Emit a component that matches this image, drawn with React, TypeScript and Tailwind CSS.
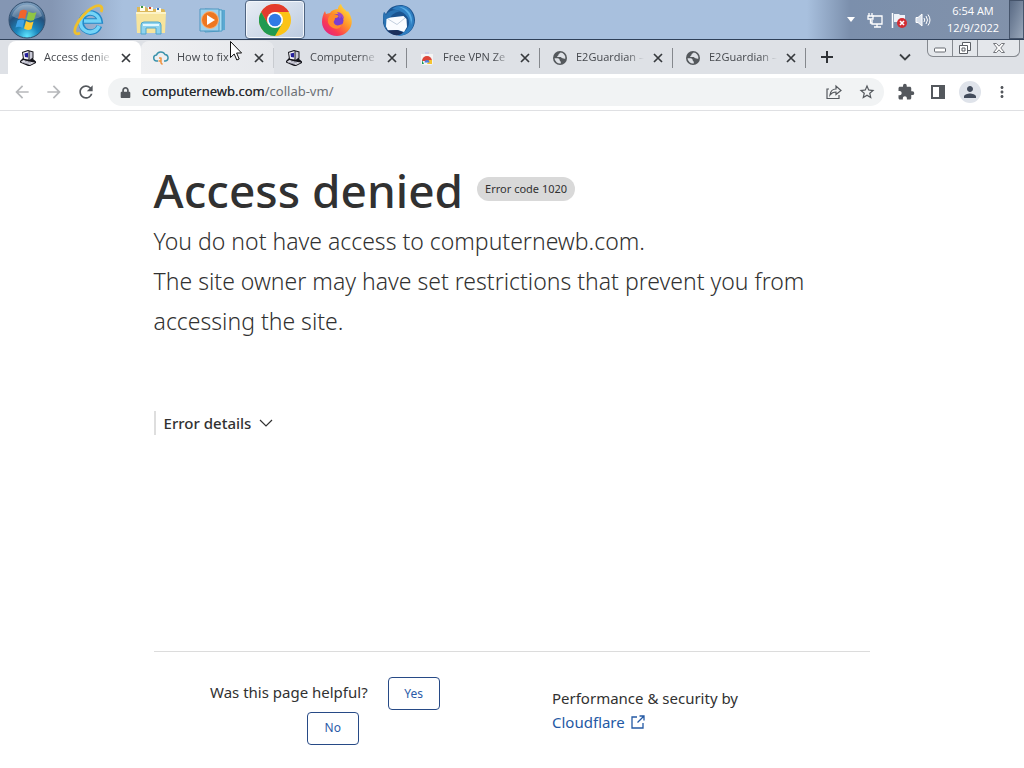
import type { ReactNode } from "react";
import { FaLock } from "react-icons/fa";
import { MdPerson, MdRefresh, MdStarOutline, MdArrowBack, MdArrowForward, MdMoreVert, MdExtension } from "react-icons/md";

const tabs = [
  { title: "Access denie", icon: "computer", state: "active" },
  { title: "How to fix", icon: "cloud", state: "hover" },
  { title: "Computerne", icon: "computer", state: "idle" },
  { title: "Free VPN Ze", icon: "store", state: "idle" },
  { title: "E2Guardian –", icon: "globe", state: "idle" },
  { title: "E2Guardian –", icon: "globe", state: "idle" },
];

function ComputerIcon() {
  return (
    <svg viewBox="0 0 16 16" className="size-4">
      <path d="M0 11l3-3h9l4 3.500v1.500l-6 3H8l-8-3.500z" fill="#15151c" />
      <path d="M1 11.500L3.500 10l8 2 3.500.5-5 2.500L2 12.500z" fill="#dcdce4" />
      <path d="M2 2l6-2 5.500 1.500V8.500L9 11.500 3 9.500z" fill="#15151c" />
      <path d="M3 2.700L8.500 1v8.500L4 8.700z" fill="#f2f2f5" />
      <path d="M4.500 3.500L8 2.700v4.800l-3-.6z" fill="#241f9c" />
      <path d="M9.500 1.500l3 .8v5.500L9.500 10z" fill="#c9c9d6" />
      <path d="M3 12.500l6 1.700M5 11.300l6 1.700" stroke="#6b6b85" strokeWidth="0.500" />
    </svg>
  );
}

function CloudIcon() {
  return (
    <svg viewBox="0 0 16 16" className="size-4" fill="none" strokeWidth="1.500">
      <path d="M5 11H4a3 3 0 01-.5-6A4.600 4.600 0 0112 4.500a3.300 3.300 0 01.500 6.500H11" stroke="#3c93ac" />
      <path d="M6 8h2.500M8 8v5l1.500 1.500M5.500 11h2.500" stroke="#ef9440" />
    </svg>
  );
}

function StoreIcon() {
  return (
    <svg viewBox="0 0 16 16" className="size-4">
      <path d="M2 4h12v9a2 2 0 01-2 2H4a2 2 0 01-2-2z" fill="#f4f4f4" />
      <path d="M6 3h4" stroke="#c5c9e8" strokeWidth="1.500" />
      <path d="M3 11a5 5 0 0110 0z" fill="#dd4437" />
      <path d="M3 10l2 4H3z" fill="#169a5d" />
      <path d="M10 10h3v4H8z" fill="#f6c431" />
      <path d="M5.500 12.500a2.500 2.500 0 015 0z" fill="#4c7fe0" />
    </svg>
  );
}

function GlobeIcon() {
  return (
    <svg viewBox="0 0 16 16" className="size-4">
      <circle cx="8" cy="8" r="7" fill="#54585c" />
      <path d="M8.500 2.600c-.3 1.200-2 .8-2 2.200 0 1.200-1.500 1-1.300 2.200h3.300c1 0 1 1.300 2 1.300s1.600.7 2.900.2a5.500 5.500 0 00-4.900-5.900z" fill="#dee1e6" />
      <path d="M2.500 8.300h3.300c1 .2 2 1 2 2.200 0 .8 1 .6 1 1.400v1.500A5.500 5.500 0 012.500 8.300z" fill="#dee1e6" />
    </svg>
  );
}

function Favicon({ name }: { name: string }) {
  if (name === "computer") return <ComputerIcon />;
  if (name === "cloud") return <CloudIcon />;
  if (name === "store") return <StoreIcon />;
  return <GlobeIcon />;
}

function CloseIcon() {
  return (
    <svg viewBox="0 0 10 10" className="size-2.5" stroke="#36393d" strokeWidth="1.700">
      <path d="M1 1l8 8M9 1L1 9" />
    </svg>
  );
}

function StartOrb() {
  return (
    <svg viewBox="0 0 38 38" className="size-[38px]">
      <defs>
        <radialGradient id="orb" cx="50%" cy="95%" r="90%">
          <stop offset="0" stopColor="#5fe6ff" />
          <stop offset="0.35" stopColor="#1b86bd" />
          <stop offset="0.7" stopColor="#24517d" />
          <stop offset="1" stopColor="#7b9dbd" />
        </radialGradient>
      </defs>
      <circle cx="19" cy="19" r="18" fill="url(#orb)" stroke="#34506f" />
      <path d="M4 15a15.500 15.500 0 0130 0c-8 5-21 5-30 0z" fill="#fff" opacity="0.25" />
      <path d="M12 10q4-2.500 7 0l-2 8q-3-2-7 0z" fill="#f0642c" />
      <path d="M20.500 10.500q4 2.500 8 .5l-2.500 8q-4 1.500-7.500-.5z" fill="#8fc545" />
      <path d="M9.500 19.500q4-2 7 0l-2 7.500q-3-2-7-.5z" fill="#3fa2e6" />
      <path d="M18 20q4 2.500 7.500.5l-2 7.500q-4 2-7.500-.5z" fill="#fdca35" />
    </svg>
  );
}

function ExplorerIcon() {
  return (
    <svg viewBox="0 0 32 32" className="size-8" fill="none">
      <path d="M26.500 22A9.500 9.500 0 1127 17H11" stroke="#2189c9" strokeWidth="5.500" />
      <path d="M26 22A9.500 9.500 0 1126.500 17H11" stroke="#74d4f7" strokeWidth="3.500" />
      <path d="M7 29c-4 2-7 0-4-7S15 5 23 2c6-1.500 7 2 5 6" stroke="#efc02c" strokeWidth="2.800" />
    </svg>
  );
}

function FolderIcon() {
  return (
    <svg viewBox="0 0 32 32" className="size-8">
      <path d="M2 3h9l2 2h15a2 2 0 012 2v22H2z" fill="#dcb859" />
      <path d="M5 2h5v5H5zM13 3h5v4h-5zM21 4h5v4h-5z" fill="#fffbe8" />
      <path d="M6 2h2v2H6z" fill="#3b9444" />
      <path d="M14 3h2v2h-2z" fill="#cf402e" />
      <path d="M22 4h2v2h-2z" fill="#3274c7" />
      <path d="M1 8h30l-1 21H2z" fill="#f7e49c" />
      <path d="M1 8h30v2H1z" fill="#fdf3c5" />
      <path d="M6 30V21q0-3 3-3h14q3 0 3 3v9h-5v-6H11v6z" fill="#8fd3ee" stroke="#4ea5cc" />
      <path d="M8 21h16" stroke="#e1f7ff" strokeWidth="2" />
    </svg>
  );
}

function MediaIcon() {
  return (
    <svg viewBox="0 0 30 30" className="size-[30px]">
      <path d="M8 4l19 1v20L8 27z" fill="#5ba9d2" />
      <path d="M7 4l17 1v21L7 27z" fill="#a7dcf2" stroke="#4e9cc4" />
      <path d="M2 4h19v22H2z" fill="#9ed2ed" stroke="#5097c0" />
      <circle cx="12" cy="15" r="8.500" fill="#ee7720" stroke="#f7b57d" />
      <path d="M9 10v10l8-5z" fill="#fff" />
    </svg>
  );
}

function ChromeIcon() {
  return (
    <svg viewBox="0 0 32 32" className="size-8">
      <circle cx="16" cy="16" r="16" fill="#fbc316" />
      <path d="M2.140 8A16 16 0 0129.860 8H16L9.070 20z" fill="#e33b2e" />
      <path d="M2.140 8A16 16 0 0016 32l6.930-12H9.070z" fill="#209a50" />
      <circle cx="16" cy="16" r="8" fill="#fff" />
      <circle cx="16" cy="16" r="6.300" fill="#2f7ae5" />
    </svg>
  );
}

function FirefoxIcon() {
  return (
    <svg viewBox="0 0 32 32" className="size-8">
      <defs>
        <linearGradient id="fox" x1="0.9" y1="0.1" x2="0.2" y2="0.9">
          <stop offset="0" stopColor="#ffe23f" />
          <stop offset="0.45" stopColor="#ff9329" />
          <stop offset="0.8" stopColor="#fb3a52" />
          <stop offset="1" stopColor="#e62a78" />
        </linearGradient>
      </defs>
      <path d="M4 7l1 3 4-1c2-3 5-4 8-4 0-2 1-4 3-5 1 4 4 5 6 8l1-1c3 5 5 10 3 15-2 6-8 10-14 10C8 32 1 26 1 18c0-4 1-8 3-11z" fill="url(#fox)" />
      <circle cx="16" cy="16.500" r="6.500" fill="#7a3ed0" />
      <path d="M9 11c3-2 5 0 7 0 3 1 1 3-2 3 0 3-2 3-1 5 1 3 5 3 8 1-1 4-5 6-9 4-5-2-7-8-3-13z" fill="#ff8a2a" />
      <path d="M16 8c4 0 7 3 7 7l-3-3c0 2-1 3-2 2 0-3-1-4-2-6z" fill="#a148c6" />
    </svg>
  );
}

function ThunderbirdIcon() {
  return (
    <svg viewBox="0 0 32 32" className="size-8">
      <path d="M1 8l2 2c3-7 10-9.500 16-9C27 2 32 9 32 16c0 8-6 15-14 15.500C9 32 2 28 0 19c-.5-4 0-7 1-11z" fill="#1c5490" />
      <path d="M9 5C15 0 24 1 28 7c5 8 4 18-5 23-3 1.500-6 2-8 1.500C24 28 28 21 25 14 22 8 15 6 9 5z" fill="#2f7fc2" />
      <path d="M16 3c7 0 13 6 13 13l-1 5C28 12 24 6 16 3z" fill="#5aaee6" />
      <path d="M1 8l2 3C6 6 13 5 18 7c-5 1-9 3-11 7L3 25C0 20-.5 13 1 8z" fill="#2a73b3" />
      <path d="M3.500 15l4-1.500 13-1.500 3 3 .5 8-3 5-6-2-10 .5-2-4z" fill="#fafcff" />
      <path d="M5 15l9 5.500 8-6.500" stroke="#c3cfde" fill="none" />
      <path d="M4 26.500l10-.5 6 2.500c-3 3-7 3.500-11 1.500z" fill="#1a2f5c" />
    </svg>
  );
}

const pinned: { name: string; icon: ReactNode; open?: boolean }[] = [
  { name: "Internet Explorer", icon: <ExplorerIcon /> },
  { name: "Windows Explorer", icon: <FolderIcon /> },
  { name: "Media Player", icon: <MediaIcon /> },
  { name: "Google Chrome", icon: <ChromeIcon />, open: true },
  { name: "Firefox", icon: <FirefoxIcon /> },
  { name: "Thunderbird", icon: <ThunderbirdIcon /> },
];

function Taskbar() {
  return (
    <header className="flex h-10 items-stretch border-b border-[#2f4059] bg-linear-to-r from-[#8496b3] from-5% via-[#a8c0de] via-12% to-[#a8c0de]">
      <button aria-label="Start" className="ml-[3px] flex w-12 items-center justify-center">
        <StartOrb />
      </button>
      <nav className="ml-2 flex gap-0.5">
        {pinned.map((app) => (
          <button
            key={app.name}
            aria-label={app.name}
            className={`flex w-[60px] items-center justify-center ${
              app.open
                ? "rounded-sm border border-[#4f6481] bg-linear-to-br from-[#e9eef5] to-[#bccbe0] shadow-[inset_0_0_0_1px_#f3f7fc]"
                : ""
            }`}
          >
            {app.icon}
          </button>
        ))}
      </nav>
      <div className="ml-auto flex items-center bg-linear-to-r from-[#a8c0de] via-[#7b8fac] via-20% to-[#8292aa] pl-10">
        <button aria-label="Show hidden icons" className="mr-3">
          <svg viewBox="0 0 8 5" className="h-[5px] w-2">
            <path d="M0 0h8L4 5z" fill="#fff" />
          </svg>
        </button>
        <div className="flex items-center gap-2">
          <svg viewBox="0 0 16 16" className="size-4" fill="none" stroke="#fff" strokeWidth="1.300">
            <path d="M6 4h9v8H5V8M7 15h7M10 12v3" />
            <path d="M2 1v3M5 1v3M1 4h5v3H1zM3.500 7v4H5" />
          </svg>
          <svg viewBox="0 0 16 16" className="size-4">
            <path d="M1.500 1v15" stroke="#fff" strokeWidth="1.500" />
            <path d="M3 2h5l1 1h5v7H3z" fill="#eef2f8" />
            <circle cx="11" cy="11" r="5" fill="#d32c32" />
            <path d="M9 9l4 4M13 9l-4 4" stroke="#fff" strokeWidth="1.600" />
          </svg>
          <svg viewBox="0 0 16 16" className="size-4" fill="none" stroke="#fff">
            <path d="M1 5.500h2L7 2v12L3 10.500H1z" fill="#d7dfeb" />
            <path d="M9 6q1.500 2 0 4M11 4q3 4 0 8M13 2.500q4 5.500 0 11" />
          </svg>
        </div>
        <div className="mb-0.5 ml-[15px] w-[54px] text-center text-[11px] leading-[17px] text-white">
          <p>6:54 AM</p>
          <p>12/9/2022</p>
        </div>
        <button
          aria-label="Show desktop"
          className="ml-[9px] h-full w-[15px] border border-[#45546b] bg-linear-to-br from-[#596a84] to-[#9aa8bb]"
        />
      </div>
    </header>
  );
}

function TabStrip() {
  return (
    <div className="flex h-[34px] bg-[#dee1e6] pl-2">
      {tabs.map((tab, idx) => (
        <div
          key={idx}
          className={`mt-px flex w-[133px] shrink-0 items-center rounded-t-lg pl-3 ${
            tab.state === "active" ? "bg-white" : tab.state === "hover" ? "bg-linear-to-r from-[#eff0f2] to-[#e6e8ec]" : ""
          }`}
        >
          <Favicon name={tab.icon} />
          <span className="ml-2 w-[68px] overflow-hidden mask-r-from-75% text-[11px] whitespace-nowrap text-[#45484d]">
            {tab.title}
          </span>
          <button aria-label="Close tab" className="ml-[9px]">
            <CloseIcon />
          </button>
          {idx > 0 && <span className={`ml-auto h-5 w-px ${tab.state === "hover" ? "bg-[#c8cbd0]" : "bg-[#85888d]"}`} />}
        </div>
      ))}
      <button aria-label="New tab" className="ml-[15px]">
        <svg viewBox="0 0 12 12" className="size-3" stroke="#2f3236" strokeWidth="2">
          <path d="M6 0v12M0 6h12" />
        </svg>
      </button>
      <button aria-label="Search tabs" className="mr-4 ml-auto">
        <svg viewBox="0 0 12 12" className="size-3" fill="none" stroke="#3c4043" strokeWidth="1.800">
          <path d="M1 3.500l5 5 5-5" />
        </svg>
      </button>
      <div className="mr-1 flex h-[17px] divide-x divide-[#85898f] rounded-b-md border border-t-0 border-[#85898f] bg-[#e4e7eb]">
        <button aria-label="Minimize" className="flex w-[25px] items-center justify-center">
          <svg viewBox="0 0 12 6" className="mt-1 h-1.5 w-3" fill="#fff" stroke="#666a70">
            <rect x="0.500" y="1" width="11" height="4" rx="1" />
          </svg>
        </button>
        <button aria-label="Restore" className="flex w-[25px] items-center justify-center">
          <svg viewBox="0 0 14 14" className="size-3.5" fill="#fff" stroke="#5b5f65">
            <path d="M4.500 1.500h8v8h-8z" />
            <path d="M1.500 4.500h8v8h-8z" />
            <path d="M4 7h3v3H4z" />
          </svg>
        </button>
        <button aria-label="Close" className="flex w-[41px] items-center justify-center">
          <svg viewBox="0 0 12 10" className="h-2.5 w-3" fill="#fff" stroke="#74777c">
            <path d="M.5.500h3L6 3.200 8.500.500h3L7.800 5l3.700 4.500h-3L6 6.800 3.500 9.500h-3L4.200 5z" />
          </svg>
        </button>
      </div>
    </div>
  );
}

function Toolbar() {
  return (
    <div className="flex h-[37px] items-center border-b border-[#dfe0e3] bg-white pr-1.5 pl-3 text-[#54585d]">
      <div className="flex gap-3">
        <button aria-label="Back" className="text-[#b6b8bb]">
          <MdArrowBack className="size-5" />
        </button>
        <button aria-label="Forward" className="text-[#b6b8bb]">
          <MdArrowForward className="size-5" />
        </button>
        <button aria-label="Reload">
          <MdRefresh className="size-5" />
        </button>
      </div>
      <div className="ml-3 flex h-7 grow items-center rounded-full bg-[#f1f3f4] pr-2 pl-3">
        <FaLock className="size-[11px]" />
        <div className="relative ml-[11px] grow font-['Noto_Sans',sans-serif] text-[13px]">
          <input
            aria-label="Address"
            defaultValue="computernewb.com/collab-vm/"
            className="w-full bg-transparent text-[#6b6f74] outline-none"
          />
          {/* darker host part drawn over the field's text */}
          <span aria-hidden="true" className="pointer-events-none absolute top-0 left-0 text-[#27292c]">
            computernewb.com
          </span>
        </div>
        <button aria-label="Share" className="mr-4">
          <svg viewBox="0 0 16 16" className="size-4" fill="none" stroke="currentColor" strokeWidth="1.200">
            <path d="M3 5H1v9.500h12V11" />
            <path d="M4 11c.5-4 3-6 6-6V2l5 4.500-5 4V8c-3 0-4.500 1-6 3z" />
          </svg>
        </button>
        <button aria-label="Bookmark">
          <MdStarOutline className="size-[18px]" />
        </button>
      </div>
      <div className="ml-1.5 flex items-center">
        <button aria-label="Extensions" className="flex w-8 justify-center">
          <MdExtension className="size-[18px]" />
        </button>
        <button aria-label="Side panel" className="flex w-8 justify-center">
          <svg viewBox="0 0 16 16" className="size-4">
            <path d="M1 1h14v14H1zM3 3v10h6V3z" fill="currentColor" fillRule="evenodd" />
          </svg>
        </button>
        <button aria-label="Profile" className="flex w-8 justify-center text-[#434c5c]">
          <span className="flex size-[22px] items-center justify-center rounded-full bg-[#dfe3ea]">
            <MdPerson className="size-[18px]" />
          </span>
        </button>
        <button aria-label="Menu" className="flex w-8 justify-center">
          <MdMoreVert className="size-[18px]" />
        </button>
      </div>
    </div>
  );
}

function ErrorPage() {
  return (
    <main className="mx-auto w-7/10 font-['Noto_Sans',sans-serif] text-[#313131]">
      <div className="flex items-start pt-12">
        <h1 className="text-[46px] leading-[62px] font-medium">Access denied</h1>
        <span className="mt-[18px] ml-3.5 rounded-full bg-[#d9d9d9] px-2 text-[11px] leading-6">Error code 1020</span>
      </div>
      <p className="text-[23px] leading-10 font-[340]">
        You do not have access to computernewb.com.
        <br />
        The site owner may have set restrictions that prevent you from accessing the site.
      </p>
      <button className="mt-[70px] flex h-6 items-center border-l-2 border-[#dedede] pl-2 text-[15px] font-medium">
        Error details
        <svg viewBox="0 0 14 8" className="ml-2 h-2 w-3.5" fill="none" stroke="currentColor" strokeWidth="1.200">
          <path d="M1 1l6 6 6-6" />
        </svg>
      </button>
      <footer className="mt-[216px] flex border-t border-[#dcdcdc] pt-6 pb-6">
        <div className="w-1/2 px-4 text-center text-[15px] leading-8">
          Was this page helpful?{" "}
          <button className="mx-4 h-[33px] w-[52px] rounded border border-[#274a86] align-middle text-[12px] leading-none text-[#2c5ba8]">Yes</button>{" "}
          <button className="mx-4 h-[33px] w-[52px] rounded border border-[#274a86] align-middle text-[12px] leading-none text-[#2c5ba8]">No</button>
        </div>
        <div className="w-1/2 pt-2.5 pl-10 text-[15px] leading-6">
          <p>Performance &amp; security by</p>
          <a href="#cloudflare" className="inline-flex items-center text-[#2459a4]">
            Cloudflare
            <svg viewBox="0 0 14 14" className="ml-1.5 size-3.5" fill="none" stroke="currentColor" strokeWidth="1.300">
              <path d="M6 2H1v11h11V8M8.500 1H13v4.500M13 1L6.500 7.500" />
            </svg>
          </a>
        </div>
      </footer>
    </main>
  );
}

export default function App() {
  return (
    <div className="relative min-h-screen bg-white font-['Open_Sans',sans-serif]">
      <Taskbar />
      <TabStrip />
      <Toolbar />
      <ErrorPage />
      {/* mouse pointer */}
      <svg viewBox="0 0 12 20" className="pointer-events-none absolute top-[41px] left-[230px] h-5 w-3">
        <path d="M.5.500v16l3.700-3.500 2.600 6 2.400-1-2.600-6h5z" fill="#fff" stroke="#111" />
      </svg>
    </div>
  );
}
